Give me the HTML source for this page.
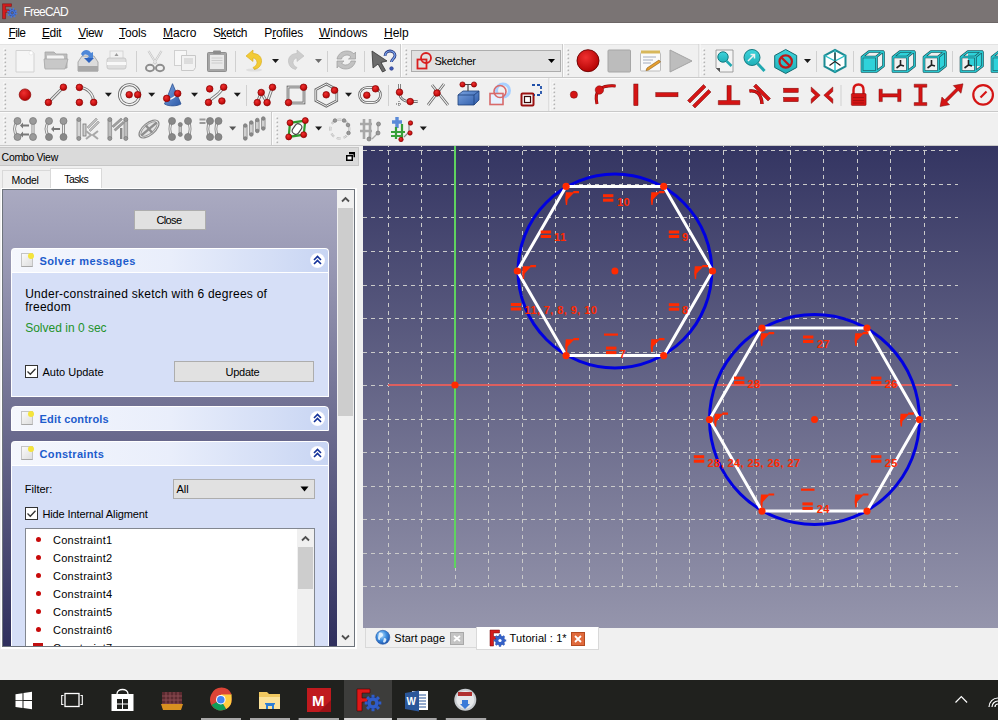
<!DOCTYPE html>
<html><head><meta charset="utf-8">
<style>
*{margin:0;padding:0;box-sizing:border-box}
html,body{width:998px;height:720px;overflow:hidden;background:#f0f0f0;font-family:"Liberation Sans",sans-serif;font-size:11px;color:#000}
.a{position:absolute}
.t{position:absolute;line-height:1;white-space:nowrap}
u{text-decoration:underline;text-underline-offset:1px}
.gripv{position:absolute;width:3px;background:repeating-linear-gradient(#a0a0a0 0 2px,transparent 2px 4px)}
.sepv{position:absolute;width:1px;background:#d2d2d2}
.btn{position:absolute;background:#e1e1e1;border:1px solid #adadad}
.cb{position:absolute;width:13px;height:13px;border:1px solid #333;background:#fff}
.hdrb{position:absolute;left:11px;width:318px;border:1px solid #fff;border-bottom:none;border-radius:4px 4px 0 0;background:linear-gradient(90deg,#f5f7fd 0%,#e9eefb 50%,#c8d5f3 100%)}
.body{position:absolute;left:11px;width:318px;background:#d6dff7;border-left:1px solid #fff;border-right:1px solid #fff}
.doc{position:absolute;width:12px;height:14px;background:linear-gradient(135deg,#fafafa,#dedede);border:1px solid #c4c4c4;border-bottom-color:#a8a8a8}
.dot{position:absolute;width:6px;height:6px;border-radius:50%;background:#f4e43c}
.colb{position:absolute;width:15px;height:15px;border-radius:50%;background:radial-gradient(#fff 60%,#eef 80%,#c9cfdc 100%)}
.hdrt{position:absolute;line-height:1;font-weight:bold;color:#1d5ccc;font-size:11px;white-space:nowrap}
</style></head><body>

<!-- title bar -->
<div class="a" style="left:0;top:0;width:998px;height:23px;background:#7a7474;border-bottom:1px solid #6c6666"></div>
<svg class="a" style="left:2px;top:3px" width="17" height="17" viewBox="0 0 17 17"><path d="M0.5 0.8h9v2.6H3.6v3.4h4.6v2.6H3.6v6.4H0.5z" fill="#d41c1c" stroke="#5a0a0a" stroke-width="0.4"/><circle cx="10.2" cy="9.8" r="3.4" fill="#4a78d8" stroke="#223a90" stroke-width="0.6"/><circle cx="10.2" cy="9.8" r="4.1" fill="none" stroke="#4a78d8" stroke-width="2" stroke-dasharray="1.6 1.6"/><circle cx="10.2" cy="9.8" r="1.3" fill="#7a7474" stroke="#223a90" stroke-width="0.6"/></svg>
<div class="t" style="left:23.5px;top:6px;font-size:12px;color:#fff;letter-spacing:-0.8px">FreeCAD</div>

<!-- menu bar -->
<div class="a" style="left:0;top:23px;width:998px;height:21px;background:#fff"></div>
<div class="t" style="left:8.4px;top:26.6px;font-size:12px;letter-spacing:-0.58px"><u>F</u>ile</div>
<div class="t" style="left:41.9px;top:26.6px;font-size:12px;letter-spacing:-0.29px"><u>E</u>dit</div>
<div class="t" style="left:78.3px;top:26.6px;font-size:12px;letter-spacing:-0.36px"><u>V</u>iew</div>
<div class="t" style="left:119px;top:26.6px;font-size:12px;letter-spacing:-0.1px"><u>T</u>ools</div>
<div class="t" style="left:163px;top:26.6px;font-size:12px;letter-spacing:0px"><u>M</u>acro</div>
<div class="t" style="left:212.9px;top:26.6px;font-size:12px;letter-spacing:-0.42px">S<u>k</u>etch</div>
<div class="t" style="left:264.3px;top:26.6px;font-size:12px;letter-spacing:-0.17px">P<u>r</u>ofiles</div>
<div class="t" style="left:318.9px;top:26.6px;font-size:12px;letter-spacing:0px"><u>W</u>indows</div>
<div class="t" style="left:384px;top:26.6px;font-size:12px;letter-spacing:0px"><u>H</u>elp</div>

<!-- toolbars -->
<div class="a" style="left:0;top:44px;width:998px;height:1px;background:#e3e3e3"></div>
<div class="a" style="left:0;top:77px;width:998px;height:1px;background:#c9c9c9"></div>
<div class="a" style="left:0;top:78px;width:998px;height:1px;background:#fbfbfb"></div>
<div class="a" style="left:0;top:111px;width:998px;height:1px;background:#c9c9c9"></div>
<div class="a" style="left:0;top:112px;width:998px;height:1px;background:#fbfbfb"></div>
<div class="a" style="left:0;top:145px;width:998px;height:1px;background:#c9c9c9"></div>
<svg class="a" style="left:0;top:0" width="998" height="146" viewBox="0 0 998 146">
<defs><radialGradient id="rd" cx="0.4" cy="0.35" r="0.7"><stop offset="0" stop-color="#f03030"/><stop offset="1" stop-color="#b00000"/></radialGradient><linearGradient id="gr" x1="0" y1="0" x2="0" y2="1"><stop offset="0" stop-color="#e2e2e2"/><stop offset="1" stop-color="#a8a8a8"/></linearGradient><linearGradient id="cy" x1="0" y1="0" x2="0" y2="1"><stop offset="0" stop-color="#3fd4dc"/><stop offset="1" stop-color="#1fb0b8"/></linearGradient><linearGradient id="bl" x1="0" y1="0" x2="1" y2="1"><stop offset="0" stop-color="#7aa3e0"/><stop offset="1" stop-color="#2d5aa8"/></linearGradient></defs>
<rect x="3.5" y="48.5" width="2" height="2" fill="#ffffff"/><rect x="4.5" y="49.5" width="1.6" height="1.6" fill="#b4b4b4"/>
<rect x="3.5" y="52.5" width="2" height="2" fill="#ffffff"/><rect x="4.5" y="53.5" width="1.6" height="1.6" fill="#b4b4b4"/>
<rect x="3.5" y="56.5" width="2" height="2" fill="#ffffff"/><rect x="4.5" y="57.5" width="1.6" height="1.6" fill="#b4b4b4"/>
<rect x="3.5" y="60.5" width="2" height="2" fill="#ffffff"/><rect x="4.5" y="61.5" width="1.6" height="1.6" fill="#b4b4b4"/>
<rect x="3.5" y="64.5" width="2" height="2" fill="#ffffff"/><rect x="4.5" y="65.5" width="1.6" height="1.6" fill="#b4b4b4"/>
<rect x="3.5" y="68.5" width="2" height="2" fill="#ffffff"/><rect x="4.5" y="69.5" width="1.6" height="1.6" fill="#b4b4b4"/>
<rect x="3.5" y="72.5" width="2" height="2" fill="#ffffff"/><rect x="4.5" y="73.5" width="1.6" height="1.6" fill="#b4b4b4"/>
<path d="M16 50.5h15l3 3v18.5h-18z" fill="#f6f6f6" stroke="#d2d2d2"/><circle cx="31" cy="53" r="2" fill="#fff" stroke="#ddd" stroke-width="0.5"/>
<path d="M45 52h9l2 2h11v14h-22z" fill="#bdbdbd" stroke="#a5a5a5" stroke-width="0.8"/><path d="M47 55.5h16l1 1v5h-17z" fill="#f4f4f4"/><path d="M44 59h24l-3 10h-20z" fill="#c8c8c8" stroke="#a8a8a8" stroke-width="0.8"/>
<path d="M78 62l4-6h12l4 6v9h-20z" fill="#dcdcdc" stroke="#9b9b9b" stroke-width="0.8"/><rect x="78" y="66" width="20" height="5.5" fill="#a8a8a8"/><path d="M81 54c2-5 8-5 10-1l2-1v6h-6l2-1.5c-1-2-5-3-6 0z" fill="#4f88d8"/><path d="M84 58h10l-5 5z" fill="#2e64c0"/>
<rect x="110" y="51" width="13" height="8" fill="#f2f2f2" stroke="#cfcfcf" stroke-width="0.8"/><path d="M114.5 56l2-3 2 3z" fill="#9a9a9a"/><rect x="107" y="58" width="19" height="11" rx="2" fill="#dedede" stroke="#c2c2c2" stroke-width="0.8"/><rect x="107" y="62" width="19" height="3" fill="#f8f8f8"/>
<rect x="136" y="51" width="1" height="21" fill="#d0d0d0"/>
<path d="M148.5 51l8 13M161.5 51l-8 13" stroke="#c4c4c4" stroke-width="2.2"/><path d="M148.5 51l8 13M161.5 51l-8 13" stroke="#f4f4f4" stroke-width="0.8"/><ellipse cx="150" cy="68" rx="4" ry="3.2" fill="none" stroke="#8e8e8e" stroke-width="2"/><ellipse cx="160" cy="68" rx="4" ry="3.2" fill="none" stroke="#8e8e8e" stroke-width="2"/>
<rect x="174.5" y="50.5" width="12" height="15" fill="#f7f7f7" stroke="#d0d0d0"/><path d="M181.5 55.5h14v12l-2 3h-12z" fill="#f2f2f2" stroke="#c8c8c8"/><path d="M184 59h9M184 61h9M184 63h9" stroke="#bdbdbd" stroke-width="0.8"/>
<rect x="207.5" y="52.5" width="19" height="19" rx="1" fill="#a6a6a6" stroke="#8f8f8f"/><rect x="210" y="55" width="14" height="14" fill="#e9e9e9"/><rect x="213" y="50.5" width="8" height="3.5" rx="1" fill="#8c8c8c"/><path d="M211.5 58h11M211.5 60.5h11M211.5 63h11" stroke="#c4c4c4" stroke-width="0.8"/>
<rect x="235" y="51" width="1" height="21" fill="#d0d0d0"/>
<path d="M246 56l7-6v3.5c6 0 9 4 8.5 8.5-.5 4-3 6.5-7 7.5l-1.5-2c2.5-1 4-3 4-5 0-2.5-2-4.5-4-4.5v3.5z" fill="#f2cb36" stroke="#d9a91a" stroke-width="0.6"/><ellipse cx="254" cy="70" rx="8" ry="1.6" fill="#000" opacity="0.07"/>
<path d="M272.0 59 h7 l-3.5 4z" fill="#1a1a1a"/>
<path d="M304 56l-7-6v3.5c-6 0-9 4-8.5 8.5.5 4 3 6.5 7 7.5l1.5-2c-2.5-1-4-3-4-5 0-2.5 2-4.5 4-4.5v3.5z" fill="#cdcdcd" stroke="#bcbcbc" stroke-width="0.6"/>
<path d="M315.0 59 h7 l-3.5 4z" fill="#6e6e6e"/>
<rect x="327" y="51" width="1" height="21" fill="#d0d0d0"/>
<path d="M337 59c1-5 5-8 10-8 3 0 5.5 1.2 7 3l1.5-2v7h-7l2.5-2c-1-1.3-2.5-2-4-2-3 0-5 2-5.5 4z" fill="#c2c2c2" stroke="#9c9c9c" stroke-width="0.7"/><path d="M355.5 61c-1 5-5 8-10 8-3 0-5.5-1.2-7-3l-1.5 2v-7h7l-2.5 2c1 1.3 2.5 2 4 2 3 0 5-2 5.5-4z" fill="#c2c2c2" stroke="#9c9c9c" stroke-width="0.7"/>
<rect x="364" y="51" width="1" height="21" fill="#d0d0d0"/>
<path d="M372 51l15 10-6 1.5 4.5 8-3 1.5-4.5-8-5 4z" fill="#6c6c6c" stroke="#333" stroke-width="0.8"/><path d="M385 56c0-3 2.5-5 5-5s5 2 5 4.5c0 3-3.5 3.5-3.5 6.5" fill="none" stroke="#28337a" stroke-width="2.8"/><path d="M385 56c0-3 2.5-5 5-5s5 2 5 4.5c0 3-3.5 3.5-3.5 6.5" fill="none" stroke="#7aa8f0" stroke-width="1.2"/><circle cx="391.5" cy="68.5" r="1.8" fill="#3a5ab8" stroke="#28337a" stroke-width="0.6"/>
<rect x="400" y="44" width="1" height="33" fill="#cbcbcb"/><rect x="401" y="44" width="1" height="33" fill="#fcfcfc"/>
<rect x="404.5" y="48.5" width="2" height="2" fill="#ffffff"/><rect x="405.5" y="49.5" width="1.6" height="1.6" fill="#b4b4b4"/>
<rect x="404.5" y="52.5" width="2" height="2" fill="#ffffff"/><rect x="405.5" y="53.5" width="1.6" height="1.6" fill="#b4b4b4"/>
<rect x="404.5" y="56.5" width="2" height="2" fill="#ffffff"/><rect x="405.5" y="57.5" width="1.6" height="1.6" fill="#b4b4b4"/>
<rect x="404.5" y="60.5" width="2" height="2" fill="#ffffff"/><rect x="405.5" y="61.5" width="1.6" height="1.6" fill="#b4b4b4"/>
<rect x="404.5" y="64.5" width="2" height="2" fill="#ffffff"/><rect x="405.5" y="65.5" width="1.6" height="1.6" fill="#b4b4b4"/>
<rect x="404.5" y="68.5" width="2" height="2" fill="#ffffff"/><rect x="405.5" y="69.5" width="1.6" height="1.6" fill="#b4b4b4"/>
<rect x="404.5" y="72.5" width="2" height="2" fill="#ffffff"/><rect x="405.5" y="73.5" width="1.6" height="1.6" fill="#b4b4b4"/>
<rect x="411.5" y="50.5" width="149" height="21" fill="#e1e1e1" stroke="#adadad"/>
<rect x="417.5" y="59.5" width="9" height="9" fill="none" stroke="#d91e1e" stroke-width="1.8"/><circle cx="426" cy="58" r="5" fill="none" stroke="#d91e1e" stroke-width="1.8"/>
<text x="434.5" y="64.8" font-family="Liberation Sans" font-size="11" letter-spacing="-0.27">Sketcher</text>
<path d="M548.0 59 h7 l-3.5 4z" fill="#000"/>
<rect x="562" y="44" width="1" height="33" fill="#cbcbcb"/><rect x="563" y="44" width="1" height="33" fill="#fcfcfc"/>
<rect x="566.5" y="48.5" width="2" height="2" fill="#ffffff"/><rect x="567.5" y="49.5" width="1.6" height="1.6" fill="#b4b4b4"/>
<rect x="566.5" y="52.5" width="2" height="2" fill="#ffffff"/><rect x="567.5" y="53.5" width="1.6" height="1.6" fill="#b4b4b4"/>
<rect x="566.5" y="56.5" width="2" height="2" fill="#ffffff"/><rect x="567.5" y="57.5" width="1.6" height="1.6" fill="#b4b4b4"/>
<rect x="566.5" y="60.5" width="2" height="2" fill="#ffffff"/><rect x="567.5" y="61.5" width="1.6" height="1.6" fill="#b4b4b4"/>
<rect x="566.5" y="64.5" width="2" height="2" fill="#ffffff"/><rect x="567.5" y="65.5" width="1.6" height="1.6" fill="#b4b4b4"/>
<rect x="566.5" y="68.5" width="2" height="2" fill="#ffffff"/><rect x="567.5" y="69.5" width="1.6" height="1.6" fill="#b4b4b4"/>
<rect x="566.5" y="72.5" width="2" height="2" fill="#ffffff"/><rect x="567.5" y="73.5" width="1.6" height="1.6" fill="#b4b4b4"/>
<circle cx="588" cy="60.7" r="11" fill="url(#rd)" stroke="#6a0000" stroke-width="0.9"/>
<rect x="608" y="50" width="22.5" height="22" rx="1" fill="#bcbcbc" stroke="#a6a6a6"/>
<rect x="640.5" y="52.5" width="20" height="18.5" rx="1" fill="#fafafa" stroke="#bcbcbc"/><rect x="641" y="50.5" width="19" height="3" fill="#d7b75c"/><path d="M643 57h13M643 60h10M643 63h8" stroke="#9aa4b8" stroke-width="0.9"/><path d="M647 68l12-8 1.5 2-12 8-2.5 .5z" fill="#e8a030" stroke="#8a5a10" stroke-width="0.6"/>
<path d="M670 50v22l22-11z" fill="#bdbdbd" stroke="#a4a4a4"/>
<rect x="698.5" y="44" width="1" height="33" fill="#cbcbcb"/><rect x="699.5" y="44" width="1" height="33" fill="#fcfcfc"/>
<rect x="702.5" y="48.5" width="2" height="2" fill="#ffffff"/><rect x="703.5" y="49.5" width="1.6" height="1.6" fill="#b4b4b4"/>
<rect x="702.5" y="52.5" width="2" height="2" fill="#ffffff"/><rect x="703.5" y="53.5" width="1.6" height="1.6" fill="#b4b4b4"/>
<rect x="702.5" y="56.5" width="2" height="2" fill="#ffffff"/><rect x="703.5" y="57.5" width="1.6" height="1.6" fill="#b4b4b4"/>
<rect x="702.5" y="60.5" width="2" height="2" fill="#ffffff"/><rect x="703.5" y="61.5" width="1.6" height="1.6" fill="#b4b4b4"/>
<rect x="702.5" y="64.5" width="2" height="2" fill="#ffffff"/><rect x="703.5" y="65.5" width="1.6" height="1.6" fill="#b4b4b4"/>
<rect x="702.5" y="68.5" width="2" height="2" fill="#ffffff"/><rect x="703.5" y="69.5" width="1.6" height="1.6" fill="#b4b4b4"/>
<rect x="702.5" y="72.5" width="2" height="2" fill="#ffffff"/><rect x="703.5" y="73.5" width="1.6" height="1.6" fill="#b4b4b4"/>
<path d="M716 50h17v22h-13l-4-4z" fill="#f4f4f4" stroke="#8c8c8c" stroke-width="0.8"/><path d="M716 68h4v4z" fill="#555"/><circle cx="723" cy="57" r="5.2" fill="url(#cy)" stroke="#157a80" stroke-width="1"/><path d="M726.5 61l5 5" stroke="#1fa8b0" stroke-width="2.5"/>
<circle cx="752" cy="57.5" r="8" fill="url(#cy)" stroke="#157a80" stroke-width="1"/><path d="M757.5 63.5l7 7.5" stroke="#1fa8b0" stroke-width="3"/><path d="M748 61l6-6M750.5 54.5h4v4" fill="none" stroke="#f0f0f0" stroke-width="1.5"/>
<path d="M785.7 49.5l11 6v12l-11 6-11-6v-12z" fill="url(#cy)" stroke="#156a70" stroke-width="1"/><circle cx="785.7" cy="61.5" r="6.2" fill="none" stroke="#c01818" stroke-width="2.2"/><path d="M781.5 57.5l8.5 8.5" stroke="#c01818" stroke-width="2.2"/>
<path d="M804.0 59 h7 l-3.5 4z" fill="#1a1a1a"/>
<rect x="816" y="51" width="1" height="21" fill="#d0d0d0"/>
<g transform="translate(823.5 49.5)"><path d="M11.5 0.5l10.5 5.5v11l-10.5 5.5-10.5-5.5v-11z" fill="#ffffff" stroke="#1d8c94" stroke-width="2"/><path d="M11.5 0.5v22M1 6l10.5 5.5 10.5-5.5" fill="none" stroke="#26c0c8" stroke-width="1.4"/><path d="M11.5 3v8M6 16l5.5-4 5.5 4" stroke="#222" stroke-width="1.2" fill="none"/></g>
<rect x="853" y="51" width="1" height="21" fill="#d0d0d0"/>
<g transform="translate(860.5 49.5)"><path d="M1.5 7.5h14.5v14.5h-14.5z" fill="#2fd2da"/><path d="M1.5 7.5l7-5.5h14l-7 5.5z" fill="none"/><path d="M16 7.5l7-5.5v14.5l-7 5.5z" fill="none"/><path d="M1.5 7.5h14.5v14.5h-14.5zM1.5 7.5l7-5.5h14l-7 5.5M16 22l7-5.5v-14.5" fill="none" stroke="#1a4a50" stroke-width="2.6" stroke-linejoin="round"/><path d="M1.5 7.5h14.5v14.5h-14.5zM1.5 7.5l7-5.5h14l-7 5.5M16 22l7-5.5v-14.5" fill="none" stroke="#27c4cc" stroke-width="1.5" stroke-linejoin="round"/></g>
<g transform="translate(891.5 49.5)"><path d="M1.5 7.5h14.5v14.5h-14.5z" fill="none"/><path d="M1.5 7.5l7-5.5h14l-7 5.5z" fill="#2fd2da"/><path d="M16 7.5l7-5.5v14.5l-7 5.5z" fill="none"/><path d="M1.5 7.5h14.5v14.5h-14.5zM1.5 7.5l7-5.5h14l-7 5.5M16 22l7-5.5v-14.5" fill="none" stroke="#1a4a50" stroke-width="2.6" stroke-linejoin="round"/><path d="M1.5 7.5h14.5v14.5h-14.5zM1.5 7.5l7-5.5h14l-7 5.5M16 22l7-5.5v-14.5" fill="none" stroke="#27c4cc" stroke-width="1.5" stroke-linejoin="round"/><path d="M9 10.5v5M9 15.5l-4 3M9 15.5l3.5 1" stroke="#222" stroke-width="1.6"/></g>
<g transform="translate(922.5 49.5)"><path d="M1.5 7.5h14.5v14.5h-14.5z" fill="none"/><path d="M1.5 7.5l7-5.5h14l-7 5.5z" fill="none"/><path d="M16 7.5l7-5.5v14.5l-7 5.5z" fill="#2fd2da"/><path d="M1.5 7.5h14.5v14.5h-14.5zM1.5 7.5l7-5.5h14l-7 5.5M16 22l7-5.5v-14.5" fill="none" stroke="#1a4a50" stroke-width="2.6" stroke-linejoin="round"/><path d="M1.5 7.5h14.5v14.5h-14.5zM1.5 7.5l7-5.5h14l-7 5.5M16 22l7-5.5v-14.5" fill="none" stroke="#27c4cc" stroke-width="1.5" stroke-linejoin="round"/><path d="M9 10.5v5M9 15.5l-4 3M9 15.5l3.5 1" stroke="#222" stroke-width="1.6"/></g>
<rect x="952" y="51" width="1" height="21" fill="#d0d0d0"/>
<g transform="translate(959.5 49.5)"><path d="M8.5 2h14v14.5h-14z" fill="#2fd2da"/><path d="M1.5 7.5h14.5v14.5h-14.5z" fill="none"/><path d="M1.5 7.5l7-5.5h14l-7 5.5z" fill="none"/><path d="M16 7.5l7-5.5v14.5l-7 5.5z" fill="none"/><path d="M1.5 7.5h14.5v14.5h-14.5zM1.5 7.5l7-5.5h14l-7 5.5M16 22l7-5.5v-14.5" fill="none" stroke="#1a4a50" stroke-width="2.6" stroke-linejoin="round"/><path d="M1.5 7.5h14.5v14.5h-14.5zM1.5 7.5l7-5.5h14l-7 5.5M16 22l7-5.5v-14.5" fill="none" stroke="#27c4cc" stroke-width="1.5" stroke-linejoin="round"/><path d="M9 10.5v5M9 15.5l-4 3M9 15.5l3.5 1" stroke="#222" stroke-width="1.6"/></g>
<g transform="translate(990.5 49.5)"><path d="M1.5 7.5h14.5v14.5h-14.5z" fill="#2fd2da"/><path d="M1.5 7.5l7-5.5h14l-7 5.5z" fill="none"/><path d="M16 7.5l7-5.5v14.5l-7 5.5z" fill="none"/><path d="M1.5 7.5h14.5v14.5h-14.5zM1.5 7.5l7-5.5h14l-7 5.5M16 22l7-5.5v-14.5" fill="none" stroke="#1a4a50" stroke-width="2.6" stroke-linejoin="round"/><path d="M1.5 7.5h14.5v14.5h-14.5zM1.5 7.5l7-5.5h14l-7 5.5M16 22l7-5.5v-14.5" fill="none" stroke="#27c4cc" stroke-width="1.5" stroke-linejoin="round"/></g>
<rect x="3.5" y="82.5" width="2" height="2" fill="#ffffff"/><rect x="4.5" y="83.5" width="1.6" height="1.6" fill="#b4b4b4"/>
<rect x="3.5" y="86.5" width="2" height="2" fill="#ffffff"/><rect x="4.5" y="87.5" width="1.6" height="1.6" fill="#b4b4b4"/>
<rect x="3.5" y="90.5" width="2" height="2" fill="#ffffff"/><rect x="4.5" y="91.5" width="1.6" height="1.6" fill="#b4b4b4"/>
<rect x="3.5" y="94.5" width="2" height="2" fill="#ffffff"/><rect x="4.5" y="95.5" width="1.6" height="1.6" fill="#b4b4b4"/>
<rect x="3.5" y="98.5" width="2" height="2" fill="#ffffff"/><rect x="4.5" y="99.5" width="1.6" height="1.6" fill="#b4b4b4"/>
<rect x="3.5" y="102.5" width="2" height="2" fill="#ffffff"/><rect x="4.5" y="103.5" width="1.6" height="1.6" fill="#b4b4b4"/>
<rect x="3.5" y="106.5" width="2" height="2" fill="#ffffff"/><rect x="4.5" y="107.5" width="1.6" height="1.6" fill="#b4b4b4"/>
<circle cx="25" cy="94.7" r="5.8" fill="url(#rd)" stroke="#8a0000" stroke-width="0.7"/>
<path d="M48.4 102.4L63.4 87.2" stroke="#777" stroke-width="3"/><path d="M48.4 102.4L63.4 87.2" stroke="#f4f4f4" stroke-width="1.2"/>
<circle cx="48.4" cy="102.4" r="3.3" fill="url(#rd)" stroke="#8a0000" stroke-width="0.7"/>
<circle cx="63.4" cy="87.2" r="3.3" fill="url(#rd)" stroke="#8a0000" stroke-width="0.7"/>
<path d="M79.4 87.4C87 87.4 93.7 94 93.7 102.4" fill="none" stroke="#777" stroke-width="3"/><path d="M79.4 87.4C87 87.4 93.7 94 93.7 102.4" fill="none" stroke="#f4f4f4" stroke-width="1.2"/>
<circle cx="79.4" cy="87.4" r="3.3" fill="url(#rd)" stroke="#8a0000" stroke-width="0.7"/>
<circle cx="79.4" cy="102.4" r="3.3" fill="url(#rd)" stroke="#8a0000" stroke-width="0.7"/>
<circle cx="93.7" cy="102.4" r="3.3" fill="url(#rd)" stroke="#8a0000" stroke-width="0.7"/>
<path d="M104.9 92.7 h7 l-3.5 4z" fill="#1a1a1a"/>
<circle cx="129.5" cy="94.7" r="10" fill="none" stroke="#666" stroke-width="3"/><circle cx="129.5" cy="94.7" r="10" fill="none" stroke="#f4f4f4" stroke-width="1.3"/>
<circle cx="129.2" cy="94.7" r="3.3" fill="url(#rd)" stroke="#8a0000" stroke-width="0.7"/>
<circle cx="137.7" cy="94.7" r="3.3" fill="url(#rd)" stroke="#8a0000" stroke-width="0.7"/>
<path d="M148.2 92.7 h7 l-3.5 4z" fill="#1a1a1a"/>
<path d="M172.5 83.7L164.5 104c4 2.5 12 2.5 16.5 0z" fill="url(#bl)" stroke="#2a4f90" stroke-width="0.8"/><path d="M166.7 98.4c3 1.5 7 0 11-4.9" fill="none" stroke="#f4f4f4" stroke-width="1.4"/>
<circle cx="166.7" cy="98.4" r="3.3" fill="url(#rd)" stroke="#8a0000" stroke-width="0.7"/>
<circle cx="177.7" cy="93.5" r="3.3" fill="url(#rd)" stroke="#8a0000" stroke-width="0.7"/>
<path d="M191.0 92.7 h7 l-3.5 4z" fill="#1a1a1a"/>
<path d="M208.5 102.4C212 96 216 99 223.7 87.2" fill="none" stroke="#777" stroke-width="3"/><path d="M208.5 102.4C212 96 216 99 223.7 87.2" fill="none" stroke="#f4f4f4" stroke-width="1.2"/>
<circle cx="209.7" cy="88.9" r="3.3" fill="url(#rd)" stroke="#8a0000" stroke-width="0.7"/>
<circle cx="223.7" cy="87.2" r="3.3" fill="url(#rd)" stroke="#8a0000" stroke-width="0.7"/>
<circle cx="208.5" cy="102.4" r="3.3" fill="url(#rd)" stroke="#8a0000" stroke-width="0.7"/>
<circle cx="221.9" cy="101" r="3.3" fill="url(#rd)" stroke="#8a0000" stroke-width="0.7"/>
<path d="M233.8 92.7 h7 l-3.5 4z" fill="#1a1a1a"/>
<rect x="246" y="85" width="1" height="21" fill="#d0d0d0"/>
<path d="M257.3 102.6L261.2 92.5L267.1 102.6L272.5 87.3" fill="none" stroke="#777" stroke-width="3"/><path d="M257.3 102.6L261.2 92.5L267.1 102.6L272.5 87.3" fill="none" stroke="#f4f4f4" stroke-width="1.2"/>
<circle cx="257.3" cy="102.6" r="3.3" fill="url(#rd)" stroke="#8a0000" stroke-width="0.7"/>
<circle cx="261.2" cy="92.5" r="3.3" fill="url(#rd)" stroke="#8a0000" stroke-width="0.7"/>
<circle cx="267.1" cy="102.6" r="3.3" fill="url(#rd)" stroke="#8a0000" stroke-width="0.7"/>
<circle cx="272.5" cy="87.3" r="3.3" fill="url(#rd)" stroke="#8a0000" stroke-width="0.7"/>
<rect x="288" y="87" width="16" height="16" fill="none" stroke="#555" stroke-width="2.6"/><rect x="288" y="87" width="16" height="16" fill="none" stroke="#f4f4f4" stroke-width="1"/>
<circle cx="288.5" cy="102.6" r="3.3" fill="url(#rd)" stroke="#8a0000" stroke-width="0.7"/>
<circle cx="303.6" cy="87.3" r="3.3" fill="url(#rd)" stroke="#8a0000" stroke-width="0.7"/>
<path d="M326.3 84l10.5 5.6v11l-10.5 5.6-10.5-5.6v-11z" fill="none" stroke="#666" stroke-width="2.6"/><path d="M326.3 84l10.5 5.6v11l-10.5 5.6-10.5-5.6v-11z" fill="none" stroke="#f4f4f4" stroke-width="1"/>
<circle cx="326.2" cy="94.8" r="3.3" fill="url(#rd)" stroke="#8a0000" stroke-width="0.7"/>
<circle cx="334.5" cy="90.3" r="3.3" fill="url(#rd)" stroke="#8a0000" stroke-width="0.7"/>
<path d="M345.0 92.7 h7 l-3.5 4z" fill="#1a1a1a"/>
<rect x="359.5" y="87.5" width="21" height="15" rx="7.5" fill="none" stroke="#666" stroke-width="2.6"/><rect x="359.5" y="87.5" width="21" height="15" rx="7.5" fill="none" stroke="#f4f4f4" stroke-width="1"/>
<circle cx="366.8" cy="95.2" r="3.3" fill="url(#rd)" stroke="#8a0000" stroke-width="0.7"/>
<circle cx="375.5" cy="88.8" r="3.3" fill="url(#rd)" stroke="#8a0000" stroke-width="0.7"/>
<rect x="388" y="85" width="1" height="21" fill="#d0d0d0"/>
<path d="M399.5 84v8c0 6 4 9.6 10.7 9.6h7.5" fill="none" stroke="#666" stroke-width="2.6"/><path d="M399.5 84v8c0 6 4 9.6 10.7 9.6h7.5" fill="none" stroke="#f4f4f4" stroke-width="1"/><path d="M396 104h6M399 101v5" stroke="#555" stroke-width="1" stroke-dasharray="1 1"/>
<circle cx="399.5" cy="92.2" r="3.3" fill="url(#rd)" stroke="#8a0000" stroke-width="0.7"/>
<circle cx="410.2" cy="101.6" r="3.3" fill="url(#rd)" stroke="#8a0000" stroke-width="0.7"/>
<path d="M432 85l16 20M444 84l-16 21" stroke="#666" stroke-width="2.8"/><path d="M432 85l16 20M444 84l-16 21" stroke="#f4f4f4" stroke-width="1.2"/>
<circle cx="437" cy="93" r="3.3" fill="url(#rd)" stroke="#8a0000" stroke-width="0.7"/>
<path d="M458 95l5-4h16v9l-5 5h-16z" fill="url(#bl)" stroke="#1d3f7a" stroke-width="0.8"/><path d="M458 95h16v10M474 95l5-4" fill="none" stroke="#1d3f7a" stroke-width="0.8"/><path d="M463 84.5h10M468 85v6" stroke="#444" stroke-width="1.2"/>
<circle cx="462.5" cy="84.5" r="2.6" fill="url(#rd)" stroke="#8a0000" stroke-width="0.7"/>
<circle cx="474" cy="84.5" r="2.6" fill="url(#rd)" stroke="#8a0000" stroke-width="0.7"/>
<circle cx="503" cy="90.5" r="6.5" fill="none" stroke="#a8d0ff" stroke-width="3"/><rect x="490" y="93.5" width="13" height="11" fill="#e6f1ff" stroke="#d86a6a" stroke-width="1.6"/><circle cx="500" cy="91.5" r="6" fill="none" stroke="#d86a6a" stroke-width="1.6"/>
<rect x="521.5" y="93.5" width="12" height="12" rx="1" fill="#f6f6f6" stroke="#9a1010" stroke-width="2"/><rect x="524.5" y="96.5" width="6" height="6" fill="#fff" stroke="#3a0a0a" stroke-width="1.2"/><path d="M532 85h9v10h-7" fill="none" stroke="#1f4fa8" stroke-width="1.8" stroke-dasharray="3 2"/>
<rect x="548.5" y="78" width="1" height="33" fill="#cbcbcb"/><rect x="549.5" y="78" width="1" height="33" fill="#fcfcfc"/>
<rect x="552.5" y="82.5" width="2" height="2" fill="#ffffff"/><rect x="553.5" y="83.5" width="1.6" height="1.6" fill="#b4b4b4"/>
<rect x="552.5" y="86.5" width="2" height="2" fill="#ffffff"/><rect x="553.5" y="87.5" width="1.6" height="1.6" fill="#b4b4b4"/>
<rect x="552.5" y="90.5" width="2" height="2" fill="#ffffff"/><rect x="553.5" y="91.5" width="1.6" height="1.6" fill="#b4b4b4"/>
<rect x="552.5" y="94.5" width="2" height="2" fill="#ffffff"/><rect x="553.5" y="95.5" width="1.6" height="1.6" fill="#b4b4b4"/>
<rect x="552.5" y="98.5" width="2" height="2" fill="#ffffff"/><rect x="553.5" y="99.5" width="1.6" height="1.6" fill="#b4b4b4"/>
<rect x="552.5" y="102.5" width="2" height="2" fill="#ffffff"/><rect x="553.5" y="103.5" width="1.6" height="1.6" fill="#b4b4b4"/>
<rect x="552.5" y="106.5" width="2" height="2" fill="#ffffff"/><rect x="553.5" y="107.5" width="1.6" height="1.6" fill="#b4b4b4"/>
<circle cx="573.9" cy="94.7" r="3.6" fill="#d41414" stroke="#7a0a0a" stroke-width="0.5"/>
<path d="M597 104c-1.5-6-.5-12 3-15 4-3 9-3.5 15.5-3" fill="none" stroke="#7a0a0a" stroke-width="3"/><path d="M597 104c-1.5-6-.5-12 3-15 4-3 9-3.5 15.5-3" fill="none" stroke="#d41414" stroke-width="2"/><circle cx="599.4" cy="90" r="4.2" fill="#d41414" stroke="#7a0a0a" stroke-width="0.5"/>
<rect x="633.8" y="84" width="4.2" height="21.6" fill="#d41414" stroke="#7a0a0a" stroke-width="0.5"/>
<rect x="655.8" y="92.6" width="22.2" height="4.2" fill="#d41414" stroke="#7a0a0a" stroke-width="0.5"/>
<path d="M687.5 100.5l16-16 2.5 2.5-16 16z M692.5 105.5l16-16 2.5 2.5-16 16z" fill="#d41414" stroke="#7a0a0a" stroke-width="0.5"/>
<path d="M727 85.5h4.2v15h8.7v4.2h-21.6v-4.2h8.7z" fill="#d41414" stroke="#7a0a0a" stroke-width="0.5"/>
<path d="M756 84l14.5 14.5-2.5 2.5-14.5-14.5z" fill="#d41414" stroke="#7a0a0a" stroke-width="0.5"/><path d="M749.5 91c7-1 12 3 12.5 13" fill="none" stroke="#7a0a0a" stroke-width="3.4"/><path d="M749.5 91c7-1 12 3 12.5 13" fill="none" stroke="#d41414" stroke-width="2.4"/>
<rect x="783.6" y="88.2" width="14.6" height="4.3" fill="#d41414" stroke="#7a0a0a" stroke-width="0.5"/><rect x="783.6" y="97.4" width="14.6" height="4.3" fill="#d41414" stroke="#7a0a0a" stroke-width="0.5"/>
<path d="M811.2 87l9 8.2-9 8.2v-4.5l4.2-3.7-4.2-3.7z M832.8 87l-9 8.2 9 8.2v-4.5l-4.2-3.7 4.2-3.7z" fill="#d41414" stroke="#7a0a0a" stroke-width="0.5"/>
<rect x="840.5" y="85" width="1" height="21" fill="#d0d0d0"/>
<path d="M853.5 94v-4c0-3.5 2-5.5 5-5.5s5 2 5 5.5v4" fill="none" stroke="#d41414" stroke-width="2.4"/><rect x="851.3" y="93.5" width="14.8" height="12" rx="1" fill="#d41414" stroke="#7a0a0a" stroke-width="0.5"/><path d="M853 97.5h11M853 100.5h11M853 103h11" stroke="#9a0c0c" stroke-width="0.7"/>
<path d="M879 89.2h3.3v4.6h15.4v-4.6h3.3v12.4h-3.3v-4.6h-15.4v4.6h-3.3z" fill="#d41414" stroke="#7a0a0a" stroke-width="0.5"/>
<path d="M914.2 84.2h12.6v3h-4.6v15.4h4.6v3h-12.6v-3h4.6v-15.4h-4.6z" fill="#d41414" stroke="#7a0a0a" stroke-width="0.5"/>
<path d="M963 83.8l-2 9.5-2.8-2.8-11.4 11.4 2.8 2.8-9.5 1.8 1.8-9.5 2.8 2.8 11.4-11.4-2.8-2.8z" fill="#d41414" stroke="#7a0a0a" stroke-width="0.5"/>
<circle cx="983.1" cy="94.9" r="9.8" fill="none" stroke="#d41414" stroke-width="2.2"/><path d="M980.5 97.5l6-6" stroke="#d41414" stroke-width="2.2"/>
<rect x="3.5" y="116.5" width="2" height="2" fill="#ffffff"/><rect x="4.5" y="117.5" width="1.6" height="1.6" fill="#b4b4b4"/>
<rect x="3.5" y="120.5" width="2" height="2" fill="#ffffff"/><rect x="4.5" y="121.5" width="1.6" height="1.6" fill="#b4b4b4"/>
<rect x="3.5" y="124.5" width="2" height="2" fill="#ffffff"/><rect x="4.5" y="125.5" width="1.6" height="1.6" fill="#b4b4b4"/>
<rect x="3.5" y="128.5" width="2" height="2" fill="#ffffff"/><rect x="4.5" y="129.5" width="1.6" height="1.6" fill="#b4b4b4"/>
<rect x="3.5" y="132.5" width="2" height="2" fill="#ffffff"/><rect x="4.5" y="133.5" width="1.6" height="1.6" fill="#b4b4b4"/>
<rect x="3.5" y="136.5" width="2" height="2" fill="#ffffff"/><rect x="4.5" y="137.5" width="1.6" height="1.6" fill="#b4b4b4"/>
<rect x="3.5" y="140.5" width="2" height="2" fill="#ffffff"/><rect x="4.5" y="141.5" width="1.6" height="1.6" fill="#b4b4b4"/>
<path d="M17.5 121c-4 6-4 10 0 16" fill="none" stroke="#8a8a8a" stroke-width="3"/><path d="M17.5 121c-4 6-4 10 0 16" fill="none" stroke="#efefef" stroke-width="1.2"/>
<path d="M33 121v16" fill="none" stroke="#8a8a8a" stroke-width="3"/><path d="M33 121v16" fill="none" stroke="#efefef" stroke-width="1.2"/>
<circle cx="17.5" cy="121" r="3.5" fill="#9a9a9a" stroke="#777" stroke-width="0.7"/>
<circle cx="33" cy="121" r="3.5" fill="#9a9a9a" stroke="#777" stroke-width="0.7"/>
<circle cx="17.5" cy="137" r="3.5" fill="#9a9a9a" stroke="#777" stroke-width="0.7"/>
<circle cx="33" cy="137" r="3.5" fill="#9a9a9a" stroke="#777" stroke-width="0.7"/>
<path d="M29 124.5h-6v-2l-3 3 3 3v-2h6zM29 133.5h-6v-2l-3 3 3 3v-2h6z" fill="#777"/>
<path d="M49 121c-4 6-4 10 0 16" fill="none" stroke="#8a8a8a" stroke-width="3"/><path d="M49 121c-4 6-4 10 0 16" fill="none" stroke="#efefef" stroke-width="1.2"/>
<path d="M63.5 121v16" fill="none" stroke="#8a8a8a" stroke-width="3"/><path d="M63.5 121v16" fill="none" stroke="#efefef" stroke-width="1.2"/>
<circle cx="49" cy="121" r="3.5" fill="#9a9a9a" stroke="#777" stroke-width="0.7"/>
<circle cx="63.5" cy="121" r="3.5" fill="#9a9a9a" stroke="#777" stroke-width="0.7"/>
<circle cx="49" cy="137" r="3.5" fill="#888" stroke="#777" stroke-width="0.7"/>
<circle cx="63.5" cy="137" r="3.5" fill="#888" stroke="#777" stroke-width="0.7"/>
<path d="M60 128h-6v-2l-3 3 3 3v-2h6z" fill="#777"/>
<rect x="77" y="119" width="3.6" height="20" rx="1.5" fill="#d4d4d4" stroke="#8a8a8a" stroke-width="0.8"/><rect x="83" y="124" width="3" height="12" fill="#cfcfcf" stroke="#777" stroke-width="0.8"/><path d="M87 127l9-9 1.5 1.5-9 9zM89 130l9-9 1.5 1.5-9 9z" fill="#bdbdbd" stroke="#8a8a8a" stroke-width="0.5"/><path d="M86 131l5 4-5 4M98 131l-5 4 5 4" fill="none" stroke="#a8a8a8" stroke-width="2"/>
<circle cx="78.8" cy="119.5" r="2" fill="#9a9a9a" stroke="#777" stroke-width="0.7"/>
<circle cx="78.8" cy="138.5" r="2" fill="#9a9a9a" stroke="#777" stroke-width="0.7"/>
<rect x="108" y="119" width="3.6" height="20" rx="1.5" fill="#bdbdbd" stroke="#8a8a8a" stroke-width="0.8"/><rect x="124" y="119" width="3.6" height="20" rx="1.5" fill="#bdbdbd" stroke="#8a8a8a" stroke-width="0.8"/><path d="M112 126l9-8 1.5 1.5-9 8zM114 129.5l9-8 1.5 1.5-9 8z" fill="#a0a0a0" stroke="#777" stroke-width="0.5"/><rect x="120" y="128" width="2.4" height="11" fill="#888"/>
<circle cx="109.8" cy="119.5" r="2" fill="#9a9a9a" stroke="#777" stroke-width="0.7"/>
<circle cx="109.8" cy="138.5" r="2" fill="#9a9a9a" stroke="#777" stroke-width="0.7"/>
<circle cx="125.8" cy="119.5" r="2" fill="#9a9a9a" stroke="#777" stroke-width="0.7"/>
<circle cx="125.8" cy="138.5" r="2" fill="#9a9a9a" stroke="#777" stroke-width="0.7"/>
<g transform="rotate(-40 149 129)"><ellipse cx="149" cy="129" rx="12" ry="6" fill="none" stroke="#8a8a8a" stroke-width="1.2"/><ellipse cx="149" cy="129" rx="10" ry="4.4" fill="#e4e4e4" stroke="#9a9a9a" stroke-width="1"/><path d="M139 129h20M149 124v10" stroke="#8e8e8e" stroke-width="2.4"/></g>
<path d="M172 121c-3 6-3 10 0 16" fill="none" stroke="#8a8a8a" stroke-width="3"/><path d="M172 121c-3 6-3 10 0 16" fill="none" stroke="#efefef" stroke-width="1.2"/>
<path d="M188 121c3 6 3 10 0 16" fill="none" stroke="#8a8a8a" stroke-width="3"/><path d="M188 121c3 6 3 10 0 16" fill="none" stroke="#efefef" stroke-width="1.2"/>
<rect x="179" y="125" width="2.4" height="9" fill="#c8c8c8" stroke="#777" stroke-width="0.6"/>
<circle cx="172" cy="121" r="3.5" fill="#888" stroke="#777" stroke-width="0.7"/>
<circle cx="188" cy="121" r="3.5" fill="#888" stroke="#777" stroke-width="0.7"/>
<circle cx="172" cy="137" r="3.5" fill="#888" stroke="#777" stroke-width="0.7"/>
<circle cx="188" cy="137" r="3.5" fill="#888" stroke="#777" stroke-width="0.7"/>
<circle cx="180.3" cy="124.5" r="2" fill="#888" stroke="#777" stroke-width="0.7"/>
<circle cx="180.3" cy="134.5" r="2" fill="#888" stroke="#777" stroke-width="0.7"/>
<rect x="199.5" y="118.5" width="6" height="2" fill="#999"/><rect x="199.5" y="122" width="6" height="2" fill="#999"/>
<path d="M210 121c-3 6-3 10 0 16" fill="none" stroke="#8a8a8a" stroke-width="3"/><path d="M210 121c-3 6-3 10 0 16" fill="none" stroke="#efefef" stroke-width="1.2"/>
<path d="M218 121c-3 6-3 10 0 16" fill="none" stroke="#8a8a8a" stroke-width="3"/><path d="M218 121c-3 6-3 10 0 16" fill="none" stroke="#efefef" stroke-width="1.2"/>
<circle cx="210" cy="121" r="3.5" fill="#888" stroke="#777" stroke-width="0.7"/>
<circle cx="218.5" cy="121" r="3.5" fill="#888" stroke="#777" stroke-width="0.7"/>
<circle cx="210" cy="137" r="3.5" fill="#888" stroke="#777" stroke-width="0.7"/>
<circle cx="218.5" cy="137" r="3.5" fill="#888" stroke="#777" stroke-width="0.7"/>
<path d="M229.2 126.5 h7 l-3.5 4z" fill="#555"/>
<rect x="243.5" y="125" width="3.6" height="14" rx="1.5" fill="#d0d0d0" stroke="#888" stroke-width="0.8"/><rect x="249.5" y="122" width="3.6" height="13" rx="1.5" fill="#d0d0d0" stroke="#888" stroke-width="0.8"/><rect x="255.5" y="119.5" width="3.6" height="12" rx="1.5" fill="#d0d0d0" stroke="#888" stroke-width="0.8"/><rect x="261.5" y="118" width="3.6" height="11" rx="1.5" fill="#d0d0d0" stroke="#888" stroke-width="0.8"/>
<circle cx="245.3" cy="125.5" r="1.8" fill="#8a8a8a" stroke="#777" stroke-width="0.7"/>
<circle cx="245.3" cy="138.5" r="1.8" fill="#8a8a8a" stroke="#777" stroke-width="0.7"/>
<circle cx="251.3" cy="122.5" r="1.8" fill="#8a8a8a" stroke="#777" stroke-width="0.7"/>
<circle cx="251.3" cy="134.5" r="1.8" fill="#8a8a8a" stroke="#777" stroke-width="0.7"/>
<circle cx="257.3" cy="120" r="1.8" fill="#8a8a8a" stroke="#777" stroke-width="0.7"/>
<circle cx="257.3" cy="131" r="1.8" fill="#8a8a8a" stroke="#777" stroke-width="0.7"/>
<circle cx="263.3" cy="118.5" r="1.8" fill="#8a8a8a" stroke="#777" stroke-width="0.7"/>
<circle cx="263.3" cy="128.5" r="1.8" fill="#8a8a8a" stroke="#777" stroke-width="0.7"/>
<rect x="271" y="112" width="1" height="33" fill="#cbcbcb"/><rect x="272" y="112" width="1" height="33" fill="#fcfcfc"/>
<rect x="275.5" y="116.5" width="2" height="2" fill="#ffffff"/><rect x="276.5" y="117.5" width="1.6" height="1.6" fill="#b4b4b4"/>
<rect x="275.5" y="120.5" width="2" height="2" fill="#ffffff"/><rect x="276.5" y="121.5" width="1.6" height="1.6" fill="#b4b4b4"/>
<rect x="275.5" y="124.5" width="2" height="2" fill="#ffffff"/><rect x="276.5" y="125.5" width="1.6" height="1.6" fill="#b4b4b4"/>
<rect x="275.5" y="128.5" width="2" height="2" fill="#ffffff"/><rect x="276.5" y="129.5" width="1.6" height="1.6" fill="#b4b4b4"/>
<rect x="275.5" y="132.5" width="2" height="2" fill="#ffffff"/><rect x="276.5" y="133.5" width="1.6" height="1.6" fill="#b4b4b4"/>
<rect x="275.5" y="136.5" width="2" height="2" fill="#ffffff"/><rect x="276.5" y="137.5" width="1.6" height="1.6" fill="#b4b4b4"/>
<rect x="275.5" y="140.5" width="2" height="2" fill="#ffffff"/><rect x="276.5" y="141.5" width="1.6" height="1.6" fill="#b4b4b4"/>
<path d="M290 122.8L305.3 120.6L303.7 134.7L288.7 136.9z" fill="#f4f4f4" stroke="#2e9a2e" stroke-width="2.2"/><rect x="291.5" y="125.5" width="11" height="7" rx="3.2" transform="rotate(-55 297 129)" fill="#fff" stroke="#444" stroke-width="1.1"/>
<circle cx="290" cy="122.8" r="3" fill="url(#rd)" stroke="#8a0000" stroke-width="0.7"/>
<circle cx="305.3" cy="120.6" r="3" fill="url(#rd)" stroke="#8a0000" stroke-width="0.7"/>
<circle cx="288.7" cy="136.9" r="3" fill="url(#rd)" stroke="#8a0000" stroke-width="0.7"/>
<circle cx="303.7" cy="134.7" r="3" fill="url(#rd)" stroke="#8a0000" stroke-width="0.7"/>
<path d="M315.1 126.5 h7 l-3.5 4z" fill="#1a1a1a"/>
<circle cx="339.8" cy="129" r="9.5" fill="none" stroke="#bbb" stroke-width="2.2" stroke-dasharray="4 3"/><circle cx="339.8" cy="129" r="9.5" fill="none" stroke="#f0f0f0" stroke-width="0.8" stroke-dasharray="4 3"/>
<circle cx="335" cy="120.5" r="1.8" fill="#999" stroke="#777" stroke-width="0.7"/>
<circle cx="344" cy="120.5" r="1.8" fill="#999" stroke="#777" stroke-width="0.7"/>
<circle cx="348" cy="125" r="1.8" fill="#999" stroke="#777" stroke-width="0.7"/>
<circle cx="348.5" cy="133" r="1.8" fill="#999" stroke="#777" stroke-width="0.7"/>
<path d="M364 119v20M370 119v20M360 124h12M360 131h12" stroke="#a8a8a8" stroke-width="2.6"/><path d="M372 139l6-6v-8" fill="none" stroke="#aaa" stroke-width="1.4"/>
<circle cx="369" cy="139" r="2" fill="#999" stroke="#777" stroke-width="0.7"/>
<circle cx="378.5" cy="124" r="2" fill="#999" stroke="#777" stroke-width="0.7"/>
<circle cx="378" cy="133" r="2" fill="#999" stroke="#777" stroke-width="0.7"/>
<path d="M392 122h10M397 117v11" stroke="#5a8ad8" stroke-width="3.4"/><path d="M396 127v12M402 124v14M391 132h14M391 136h12" stroke="#38a038" stroke-width="2.2"/><path d="M404 137l5-5v-9" fill="none" stroke="#888" stroke-width="1.2"/>
<circle cx="401" cy="139.5" r="2.2" fill="url(#rd)" stroke="#8a0000" stroke-width="0.7"/>
<circle cx="410.5" cy="123" r="2.2" fill="url(#rd)" stroke="#8a0000" stroke-width="0.7"/>
<circle cx="410" cy="133" r="2.2" fill="url(#rd)" stroke="#8a0000" stroke-width="0.7"/>
<path d="M419.8 126.5 h7 l-3.5 4z" fill="#1a1a1a"/>
</svg>

<!-- combo view -->
<div class="a" style="left:0;top:147px;width:359px;height:19px;background:#dadada;border:1px solid #c6c6c6;border-left:none"></div>
<div class="t" style="left:1.6px;top:152px;font-size:10.5px;letter-spacing:-0.3px">Combo View</div>
<svg class="a" style="left:346px;top:152px" width="9" height="9" viewBox="0 0 9 9"><path d="M3 0.75h5.25v4.5" fill="none" stroke="#000" stroke-width="1.5"/><rect x="0.75" y="3.75" width="5.5" height="4.5" fill="#fff" stroke="#000" stroke-width="1.5"/><rect x="3" y="0.75" width="5.25" height="1.5" fill="#000"/></svg>
<div class="a" style="left:2px;top:170px;width:49px;height:20px;background:#f0f0f0;border:1px solid #d9d9d9;border-bottom:none"></div>
<div class="t" style="left:11.6px;top:174.6px;font-size:10.5px;letter-spacing:-0.35px">Model</div>
<div class="a" style="left:50px;top:168px;width:52px;height:22px;background:#fff;border:1px solid #d9d9d9;border-bottom:none"></div>
<div class="t" style="left:64.3px;top:173.9px;font-size:10.5px;letter-spacing:-0.6px">Tasks</div>

<!-- panel frame -->
<div class="a" style="left:1px;top:188px;width:356px;height:461px;background:#fff"></div>
<div class="a" style="left:2px;top:189px;width:353px;height:458px;background:#6e747c"></div>
<div class="a" style="left:3px;top:190px;width:334px;height:456px;background:linear-gradient(#aaaac1,#9a9ab5 15%,#2f2f5d)"></div>
<div class="a" style="left:337px;top:190px;width:17px;height:456px;background:#f0f0f0"></div>
<div class="a" style="left:338px;top:208px;width:15px;height:208px;background:#cdcdcd"></div>
<svg class="a" style="left:341px;top:196px" width="9" height="7" viewBox="0 0 9 7"><path d="M1 5.5l3.5-3.5 3.5 3.5" fill="none" stroke="#505050" stroke-width="1.8"/></svg>
<svg class="a" style="left:341px;top:634px" width="9" height="7" viewBox="0 0 9 7"><path d="M1 1.5l3.5 3.5 3.5-3.5" fill="none" stroke="#505050" stroke-width="1.8"/></svg>

<div class="btn" style="left:134px;top:210px;width:72px;height:20px"></div>
<div class="t" style="left:156.4px;top:215.1px;font-size:11px;letter-spacing:-0.6px">Close</div>

<!-- solver messages -->
<div class="hdrb" style="top:248px;height:25px"></div>
<div class="a" style="left:12px;top:272px;width:316px;height:1px;background:#fff"></div>
<div class="body" style="top:273px;height:124px;border-bottom:1px solid #fff"></div>
<div class="doc" style="left:21px;top:253px"></div><div class="dot" style="left:28.2px;top:252.8px"></div>
<div class="hdrt" style="left:39.4px;top:256.2px;letter-spacing:0.44px">Solver messages</div>
<div class="colb" style="left:310px;top:253px"></div>
<svg class="a" style="left:313px;top:255px" width="9" height="10" viewBox="0 0 9 10"><path d="M1 5l3.5-3.5 3.5 3.5M1 9l3.5-3.5 3.5 3.5" fill="none" stroke="#13319a" stroke-width="1.6"/></svg>
<div class="t" style="left:25.2px;top:287.6px;font-size:12px;letter-spacing:0.25px">Under-constrained sketch with 6 degrees of</div>
<div class="t" style="left:25.2px;top:301.2px;font-size:12px;letter-spacing:0.25px">freedom</div>
<div class="t" style="left:25.2px;top:321.5px;font-size:12px;color:#23922a">Solved in 0 sec</div>
<div class="cb" style="left:25px;top:365px"></div>
<svg class="a" style="left:25px;top:365px" width="13" height="13" viewBox="0 0 13 13"><path d="M2.5 6.5l2.8 2.8 5.2-5.6" fill="none" stroke="#333" stroke-width="1.3"/></svg>
<div class="t" style="left:42.5px;top:367px;font-size:11px">Auto Update</div>
<div class="btn" style="left:174px;top:361px;width:140px;height:21px"></div>
<div class="t" style="left:225.5px;top:366.7px;font-size:11px;letter-spacing:-0.25px">Update</div>

<!-- edit controls -->
<div class="hdrb" style="top:406px;height:25px;border-bottom:1px solid #fff"></div>
<div class="doc" style="left:21px;top:411px"></div><div class="dot" style="left:28.2px;top:410.8px"></div>
<div class="hdrt" style="left:39.6px;top:414.2px;letter-spacing:0.15px">Edit controls</div>
<div class="colb" style="left:310px;top:411px"></div>
<svg class="a" style="left:313px;top:413px" width="9" height="10" viewBox="0 0 9 10"><path d="M1 5l3.5-3.5 3.5 3.5M1 9l3.5-3.5 3.5 3.5" fill="none" stroke="#13319a" stroke-width="1.6"/></svg>

<!-- constraints -->
<div class="hdrb" style="top:441px;height:25px"></div>
<div class="a" style="left:12px;top:465px;width:316px;height:1px;background:#fff"></div>
<div class="body" style="top:466px;height:180px"></div>
<div class="doc" style="left:21px;top:446px"></div><div class="dot" style="left:28.2px;top:445.8px"></div>
<div class="hdrt" style="left:39.6px;top:448.6px;letter-spacing:0.31px">Constraints</div>
<div class="colb" style="left:310px;top:446px"></div>
<svg class="a" style="left:313px;top:448px" width="9" height="10" viewBox="0 0 9 10"><path d="M1 5l3.5-3.5 3.5 3.5M1 9l3.5-3.5 3.5 3.5" fill="none" stroke="#13319a" stroke-width="1.6"/></svg>
<div class="t" style="left:24.8px;top:483.5px;font-size:11px">Filter:</div>
<div class="btn" style="left:173px;top:479px;width:142px;height:20px"></div>
<div class="t" style="left:176.5px;top:484px;font-size:11px">All</div>
<svg class="a" style="left:300px;top:486px" width="9" height="6" viewBox="0 0 9 6"><path d="M0.5 0.5h8l-4 5z" fill="#000"/></svg>
<div class="cb" style="left:25px;top:507px"></div>
<svg class="a" style="left:25px;top:507px" width="13" height="13" viewBox="0 0 13 13"><path d="M2.5 6.5l2.8 2.8 5.2-5.6" fill="none" stroke="#333" stroke-width="1.3"/></svg>
<div class="t" style="left:42.4px;top:509.2px;font-size:11px;letter-spacing:-0.1px">Hide Internal Aligment</div>
<div class="a" style="left:25px;top:528px;width:290px;height:118px;background:#fff;border:1px solid #828790;border-bottom:none"></div>
<div class="a" style="left:297px;top:529px;width:17px;height:117px;background:#f0f0f0"></div>
<div class="a" style="left:298px;top:547px;width:15px;height:42px;background:#cdcdcd"></div>
<svg class="a" style="left:301px;top:535px" width="9" height="7" viewBox="0 0 9 7"><path d="M1 5.5l3.5-3.5 3.5 3.5" fill="none" stroke="#505050" stroke-width="1.8"/></svg>
<div class="a" style="left:26px;top:529px;width:271px;height:117px;overflow:hidden"><div class="a" style="left:9.5px;top:7.50px;width:5px;height:5px;border-radius:50%;background:#c80a0a"></div>
<div class="t" style="left:26.9px;top:6.09px;font-size:11px;letter-spacing:0.3px">Constraint1</div>
<div class="a" style="left:9.5px;top:25.50px;width:5px;height:5px;border-radius:50%;background:#c80a0a"></div>
<div class="t" style="left:26.9px;top:24.09px;font-size:11px;letter-spacing:0.3px">Constraint2</div>
<div class="a" style="left:9.5px;top:43.50px;width:5px;height:5px;border-radius:50%;background:#c80a0a"></div>
<div class="t" style="left:26.9px;top:42.09px;font-size:11px;letter-spacing:0.3px">Constraint3</div>
<div class="a" style="left:9.5px;top:61.50px;width:5px;height:5px;border-radius:50%;background:#c80a0a"></div>
<div class="t" style="left:26.9px;top:60.09px;font-size:11px;letter-spacing:0.3px">Constraint4</div>
<div class="a" style="left:9.5px;top:79.50px;width:5px;height:5px;border-radius:50%;background:#c80a0a"></div>
<div class="t" style="left:26.9px;top:78.09px;font-size:11px;letter-spacing:0.3px">Constraint5</div>
<div class="a" style="left:9.5px;top:97.50px;width:5px;height:5px;border-radius:50%;background:#c80a0a"></div>
<div class="t" style="left:26.9px;top:96.09px;font-size:11px;letter-spacing:0.3px">Constraint6</div>
<div class="a" style="left:7px;top:114.00px;width:10px;height:8px;background:#c01010"></div>
<div class="t" style="left:26.9px;top:114.09px;font-size:11px;letter-spacing:0.3px">Constraint7</div></div>

<!-- 3d view -->
<svg class="a" style="left:363px;top:146px" width="635" height="482" viewBox="363 146 635 482">
 <defs><linearGradient id="vg" x1="0" y1="0" x2="0" y2="1"><stop offset="0" stop-color="#343562"/><stop offset="1" stop-color="#9595ac"/></linearGradient></defs>
 <rect x="363" y="146" width="635" height="482" fill="url(#vg)"/>
 <g stroke="#cacaca" stroke-width="1" stroke-dasharray="4 4" fill="none">
<line x1="388.5" y1="146" x2="388.5" y2="587" stroke-dashoffset="3"/>
<line x1="421.5" y1="146" x2="421.5" y2="587" stroke-dashoffset="3"/>
<line x1="455.5" y1="146" x2="455.5" y2="587" stroke-dashoffset="3"/>
<line x1="488.5" y1="146" x2="488.5" y2="587" stroke-dashoffset="3"/>
<line x1="522.5" y1="146" x2="522.5" y2="587" stroke-dashoffset="3"/>
<line x1="555.5" y1="146" x2="555.5" y2="587" stroke-dashoffset="3"/>
<line x1="589.5" y1="146" x2="589.5" y2="587" stroke-dashoffset="3"/>
<line x1="622.5" y1="146" x2="622.5" y2="587" stroke-dashoffset="3"/>
<line x1="656.5" y1="146" x2="656.5" y2="587" stroke-dashoffset="3"/>
<line x1="689.5" y1="146" x2="689.5" y2="587" stroke-dashoffset="3"/>
<line x1="723.5" y1="146" x2="723.5" y2="587" stroke-dashoffset="3"/>
<line x1="756.5" y1="146" x2="756.5" y2="587" stroke-dashoffset="3"/>
<line x1="790.5" y1="146" x2="790.5" y2="587" stroke-dashoffset="3"/>
<line x1="823.5" y1="146" x2="823.5" y2="587" stroke-dashoffset="3"/>
<line x1="857.5" y1="146" x2="857.5" y2="587" stroke-dashoffset="3"/>
<line x1="890.5" y1="146" x2="890.5" y2="587" stroke-dashoffset="3"/>
<line x1="924.5" y1="146" x2="924.5" y2="587" stroke-dashoffset="3"/>
<line x1="363" y1="150.5" x2="958" y2="150.5" stroke-dashoffset="0"/>
<line x1="363" y1="184.5" x2="958" y2="184.5" stroke-dashoffset="0"/>
<line x1="363" y1="217.5" x2="958" y2="217.5" stroke-dashoffset="0"/>
<line x1="363" y1="251.5" x2="958" y2="251.5" stroke-dashoffset="0"/>
<line x1="363" y1="285.5" x2="958" y2="285.5" stroke-dashoffset="0"/>
<line x1="363" y1="318.5" x2="958" y2="318.5" stroke-dashoffset="0"/>
<line x1="363" y1="352.5" x2="958" y2="352.5" stroke-dashoffset="0"/>
<line x1="363" y1="385.5" x2="958" y2="385.5" stroke-dashoffset="0"/>
<line x1="363" y1="419.5" x2="958" y2="419.5" stroke-dashoffset="0"/>
<line x1="363" y1="452.5" x2="958" y2="452.5" stroke-dashoffset="0"/>
<line x1="363" y1="486.5" x2="958" y2="486.5" stroke-dashoffset="0"/>
<line x1="363" y1="519.5" x2="958" y2="519.5" stroke-dashoffset="0"/>
<line x1="363" y1="553.5" x2="958" y2="553.5" stroke-dashoffset="0"/>
<line x1="363" y1="586.5" x2="958" y2="586.5" stroke-dashoffset="0"/>
</g>
<line x1="388" y1="385" x2="951.5" y2="385" stroke="#dc5f5f" stroke-width="2"/>
<line x1="455" y1="146" x2="455" y2="568" stroke="#5fd35f" stroke-width="2"/>
<circle cx="614.9" cy="271.0" r="96.9" fill="none" stroke="#0000e0" stroke-width="3"/>
<path d="M712.5 271.0 L663.7 186.4 L566.1 186.4 L517.3 271.0 L566.1 355.6 L663.7 355.6 Z" fill="none" stroke="#fff" stroke-width="3" stroke-linejoin="miter"/>
<path transform="translate(565 191)" d="M0.8 1.2H8.3V0H14V2.2H8.6L2.6 8.6L2.1 14H0.9L0.2 8.6Z" fill="#ff2a00"/>
<path transform="translate(650.5 191)" d="M0.8 1.2H8.3V0H14V2.2H8.6L2.6 8.6L2.1 14H0.9L0.2 8.6Z" fill="#ff2a00"/>
<path transform="translate(522 265)" d="M0.8 1.2H8.3V0H14V2.2H8.6L2.6 8.6L2.1 14H0.9L0.2 8.6Z" fill="#ff2a00"/>
<path transform="translate(694 265)" d="M0.8 1.2H8.3V0H14V2.2H8.6L2.6 8.6L2.1 14H0.9L0.2 8.6Z" fill="#ff2a00"/>
<path transform="translate(565 338)" d="M0.8 1.2H8.3V0H14V2.2H8.6L2.6 8.6L2.1 14H0.9L0.2 8.6Z" fill="#ff2a00"/>
<path transform="translate(650.5 338)" d="M0.8 1.2H8.3V0H14V2.2H8.6L2.6 8.6L2.1 14H0.9L0.2 8.6Z" fill="#ff2a00"/>
<rect x="603" y="194.2" width="10.4" height="3" fill="#ff2a00"/><rect x="603" y="198.7" width="10.4" height="3" fill="#ff2a00"/>
<text x="617" y="205.5" font-family="Liberation Sans" font-weight="bold" font-size="11" letter-spacing="0.4" fill="#ff2a00">10</text>
<rect x="540.7" y="230.5" width="10.4" height="3" fill="#ff2a00"/><rect x="540.7" y="235.0" width="10.4" height="3" fill="#ff2a00"/>
<text x="554" y="241" font-family="Liberation Sans" font-weight="bold" font-size="11" letter-spacing="0.4" fill="#ff2a00">11</text>
<rect x="668.8" y="230.5" width="10.4" height="3" fill="#ff2a00"/><rect x="668.8" y="235.0" width="10.4" height="3" fill="#ff2a00"/>
<text x="682" y="241" font-family="Liberation Sans" font-weight="bold" font-size="11" letter-spacing="0.4" fill="#ff2a00">9</text>
<rect x="510.8" y="303" width="10.4" height="3" fill="#ff2a00"/><rect x="510.8" y="307.5" width="10.4" height="3" fill="#ff2a00"/>
<text x="524.5" y="313.8" font-family="Liberation Sans" font-weight="bold" font-size="11" letter-spacing="0.4" fill="#ff2a00">11, 7, 8, 9, 10</text>
<rect x="668.8" y="303.2" width="10.4" height="3" fill="#ff2a00"/><rect x="668.8" y="307.7" width="10.4" height="3" fill="#ff2a00"/>
<text x="682" y="314" font-family="Liberation Sans" font-weight="bold" font-size="11" letter-spacing="0.4" fill="#ff2a00">8</text>
<rect x="604" y="333.5" width="14" height="2.2" fill="#ff2a00"/>
<rect x="606" y="346.6" width="10.4" height="3" fill="#ff2a00"/><rect x="606" y="351.1" width="10.4" height="3" fill="#ff2a00"/>
<text x="619.5" y="358" font-family="Liberation Sans" font-weight="bold" font-size="11" letter-spacing="0.4" fill="#ff2a00">7</text>
<circle cx="712.5" cy="271.0" r="3.6" fill="#ff2a00"/>
<circle cx="663.7" cy="186.4" r="3.6" fill="#ff2a00"/>
<circle cx="566.1" cy="186.4" r="3.6" fill="#ff2a00"/>
<circle cx="517.3" cy="271.0" r="3.6" fill="#ff2a00"/>
<circle cx="566.1" cy="355.6" r="3.6" fill="#ff2a00"/>
<circle cx="663.7" cy="355.6" r="3.6" fill="#ff2a00"/>
<circle cx="614.9" cy="271.0" r="3.5" fill="#ff2a00"/>
<circle cx="814.5" cy="419.6" r="105.0" fill="none" stroke="#0000e0" stroke-width="3"/>
<path d="M919.5 419.6 L867.0 328.1 L762.0 328.1 L709.5 419.6 L762.0 511.1 L867.0 511.1 Z" fill="none" stroke="#fff" stroke-width="3" stroke-linejoin="miter"/>
<path transform="translate(760.2 332)" d="M0.8 1.2H8.3V0H14V2.2H8.6L2.6 8.6L2.1 14H0.9L0.2 8.6Z" fill="#ff2a00"/>
<path transform="translate(854.4 332)" d="M0.8 1.2H8.3V0H14V2.2H8.6L2.6 8.6L2.1 14H0.9L0.2 8.6Z" fill="#ff2a00"/>
<path transform="translate(714 412.6)" d="M0.8 1.2H8.3V0H14V2.2H8.6L2.6 8.6L2.1 14H0.9L0.2 8.6Z" fill="#ff2a00"/>
<path transform="translate(899.8 412.6)" d="M0.8 1.2H8.3V0H14V2.2H8.6L2.6 8.6L2.1 14H0.9L0.2 8.6Z" fill="#ff2a00"/>
<path transform="translate(760.2 493.4)" d="M0.8 1.2H8.3V0H14V2.2H8.6L2.6 8.6L2.1 14H0.9L0.2 8.6Z" fill="#ff2a00"/>
<path transform="translate(854.4 493.4)" d="M0.8 1.2H8.3V0H14V2.2H8.6L2.6 8.6L2.1 14H0.9L0.2 8.6Z" fill="#ff2a00"/>
<rect x="803" y="335.5" width="10.4" height="3" fill="#ff2a00"/><rect x="803" y="340.0" width="10.4" height="3" fill="#ff2a00"/>
<text x="817" y="348" font-family="Liberation Sans" font-weight="bold" font-size="11" letter-spacing="0.4" fill="#ff2a00">27</text>
<rect x="734" y="376.6" width="10.4" height="3" fill="#ff2a00"/><rect x="734" y="381.1" width="10.4" height="3" fill="#ff2a00"/>
<text x="747.5" y="387.8" font-family="Liberation Sans" font-weight="bold" font-size="11" letter-spacing="0.4" fill="#ff2a00">28</text>
<rect x="871" y="376.6" width="10.4" height="3" fill="#ff2a00"/><rect x="871" y="381.1" width="10.4" height="3" fill="#ff2a00"/>
<text x="884.8" y="388" font-family="Liberation Sans" font-weight="bold" font-size="11" letter-spacing="0.4" fill="#ff2a00">26</text>
<rect x="693.8" y="455.2" width="10.4" height="3" fill="#ff2a00"/><rect x="693.8" y="459.7" width="10.4" height="3" fill="#ff2a00"/>
<text x="707.6" y="467" font-family="Liberation Sans" font-weight="bold" font-size="11" letter-spacing="0.4" fill="#ff2a00">28, 24, 25, 26, 27</text>
<rect x="871" y="455.2" width="10.4" height="3" fill="#ff2a00"/><rect x="871" y="459.7" width="10.4" height="3" fill="#ff2a00"/>
<text x="884.8" y="467" font-family="Liberation Sans" font-weight="bold" font-size="11" letter-spacing="0.4" fill="#ff2a00">25</text>
<rect x="801" y="488.6" width="13.5" height="2.2" fill="#ff2a00"/>
<rect x="802.4" y="502.4" width="10.4" height="3" fill="#ff2a00"/><rect x="802.4" y="506.9" width="10.4" height="3" fill="#ff2a00"/>
<text x="816.8" y="513" font-family="Liberation Sans" font-weight="bold" font-size="11" letter-spacing="0.4" fill="#ff2a00">24</text>
<circle cx="919.5" cy="419.6" r="3.6" fill="#ff2a00"/>
<circle cx="867.0" cy="328.1" r="3.6" fill="#ff2a00"/>
<circle cx="762.0" cy="328.1" r="3.6" fill="#ff2a00"/>
<circle cx="709.5" cy="419.6" r="3.6" fill="#ff2a00"/>
<circle cx="762.0" cy="511.1" r="3.6" fill="#ff2a00"/>
<circle cx="867.0" cy="511.1" r="3.6" fill="#ff2a00"/>
<circle cx="814.5" cy="419.6" r="3.5" fill="#ff2a00"/>
<circle cx="455" cy="385" r="3.6" fill="#ff2a00"/>
</svg>

<!-- document tabs -->
<div class="a" style="left:365px;top:628px;width:112px;height:20px;background:#f0f0f0;border:1px solid #d9d9d9;border-top:none"></div>
<div class="a" style="left:476px;top:627px;width:123px;height:23px;background:#fff;border:1px solid #d9d9d9;border-top:none"></div>
<div class="t" style="left:394.3px;top:632.7px;font-size:11px">Start page</div>
<div class="t" style="left:509.6px;top:632.9px;font-size:11px;letter-spacing:0.1px">Tutorial : 1*</div>

<!-- taskbar -->
<div class="a" style="left:0;top:680px;width:998px;height:40px;background:#20211e"></div>
<svg class="a" style="left:363px;top:627px" width="240" height="24" viewBox="363 627 240 24"><defs><radialGradient id="glb" cx="0.4" cy="0.35" r="0.7"><stop offset="0" stop-color="#bfe4ff"/><stop offset="0.5" stop-color="#3f8fe0"/><stop offset="1" stop-color="#1a4fa8"/></radialGradient></defs><circle cx="382.8" cy="637.3" r="7" fill="url(#glb)" stroke="#2a5ba8" stroke-width="0.6"/><path d="M379 633c2-1 4 0 4 2s-3 2-3 4-2 1-2-1z M384 638c2 0 3 1 2 3s-2 2-3 1z" fill="#e8f4ff" opacity="0.9"/><rect x="450.5" y="632.5" width="13" height="12" fill="#c4c4c4" stroke="#a8a8a8"/><path d="M454 636l6 5M460 636l-6 5" stroke="#fff" stroke-width="1.8"/><path d="M490 630h9.5v3h-6v3.5h5v3h-5v6.5h-3.5z" fill="#d41c1c" stroke="#6a0000" stroke-width="0.5"/><g transform="translate(500 640.5)"><circle r="4.6" fill="#3562c8" stroke="#1a2f70" stroke-width="0.6"/><path d="M0 -6.2v2.5M0 3.7v2.5M-6.2 0h2.5M3.7 0h2.5M-4.4 -4.4l1.8 1.8M2.6 2.6l1.8 1.8M-4.4 4.4l1.8 -1.8M2.6 -2.6l1.8 -1.8" stroke="#3562c8" stroke-width="2.2"/><circle r="1.6" fill="#fff"/></g><rect x="571.5" y="632.5" width="13" height="13" fill="#e06a3c" stroke="#b44a20"/><path d="M575 636l6 6M581 636l-6 6" stroke="#fff" stroke-width="1.8"/></svg>
<svg class="a" style="left:0;top:680px" width="998" height="40" viewBox="0 680 998 40">
<rect x="344" y="680" width="48" height="40" fill="#3d3d3b"/>
<path d="M15.5 694.2l7-1v7h-7z M23.5 693l8.5-1.2v8.2h-8.5z M15.5 701h7v7l-7-1z M23.5 701h8.5v8.2l-8.5-1.2z" fill="#fff"/>
<rect x="65" y="693.5" width="14" height="13" fill="none" stroke="#fff" stroke-width="1.3"/><path d="M63.5 695.5h-1.8v9h1.8M80.5 695.5h1.8v9h-1.8" fill="none" stroke="#fff" stroke-width="1.1"/>
<path d="M111.5 694h22v17h-22z" fill="#fff"/><path d="M117 694c0-6 11-6 11 0" fill="none" stroke="#fff" stroke-width="1.3"/><path d="M117 699h5v4.5h-5zM123 699h5v4.5h-5zM117 704.5h5v4.5h-5zM123 704.5h5v4.5h-5z" fill="#1e1f1c"/>
<rect x="162" y="692" width="20" height="16" fill="#5a2a30"/><path d="M166 692v16M170 692v16M174 692v16M178 692v16M162 696h20M162 700h20M162 704h20" stroke="#8a4a50" stroke-width="1"/><path d="M161 704h22l-2 6h-18z" fill="#d89020"/>
<circle cx="220.8" cy="699.7" r="10.8" fill="#db4437"/><path d="M220.8 699.7L211.5 705.1A10.8 10.8 0 0 0 226.2 709.1z" fill="#0f9d58"/><path d="M220.8 699.7L226.2 709.1A10.8 10.8 0 0 0 231.6 699.7V694.3h-10.8z" fill="#ffcd40"/><path d="M220.8 694.3h10.8A10.8 10.8 0 0 0 211.5 694.3l4.6 8z" fill="#db4437"/><circle cx="220.8" cy="699.7" r="4.8" fill="#fff"/><circle cx="220.8" cy="699.7" r="3.8" fill="#4285f4"/>
<path d="M259 692h8l2 2h11v15h-21z" fill="#f0c860"/><path d="M259 697h21v12h-21z" fill="#fbe29a"/><path d="M266 704h8v5h-2v-3h-4v3h-2z" fill="#2d7fd6"/><rect x="265" y="703" width="10" height="1.5" fill="#2d7fd6"/>
<rect x="307" y="688" width="24" height="24" fill="#c01a1e"/><path d="M319 712l12-12v12z" fill="#9c1216"/><text x="312" y="706" font-family="Liberation Sans" font-weight="bold" font-size="15" fill="#fff">M</text>
<path d="M357 689h13v4h-8v5h7v4h-7v9h-5z" fill="#e01818" stroke="#4a0000" stroke-width="0.6"/>
<g transform="translate(373 703)"><circle r="6" fill="#2f5cc8" stroke="#142a70" stroke-width="0.8"/><path d="M0 -8.3v3M0 5.3v3M-8.3 0h3M5.3 0h3M-5.9 -5.9l2.1 2.1M3.8 3.8l2.1 2.1M-5.9 5.9l2.1 -2.1M3.8 -3.8l2.1 -2.1" stroke="#2f5cc8" stroke-width="3"/><circle r="2.2" fill="#3d3d3b"/></g>
<rect x="412" y="691" width="16" height="19" fill="#fff"/><path d="M414 695h12M414 698h12M414 701h12M414 704h12M414 707h12" stroke="#2b579a" stroke-width="1"/><path d="M405 693l14-2.5v21l-14-2.5z" fill="#2b579a"/><text x="406.5" y="705" font-family="Liberation Sans" font-weight="bold" font-size="10" fill="#fff">W</text>
<circle cx="465.3" cy="699.7" r="11" fill="#c8ccd0"/><circle cx="465.3" cy="699.7" r="9" fill="#e6e8ea"/><rect x="458" y="692" width="14" height="4" fill="#b03030"/><path d="M462 700h6v4h2l-5 5-5-5h2z" fill="#3a7ad8"/>
<rect x="201" y="718" width="40" height="2" fill="#a8a8a8"/>
<rect x="250" y="718" width="40" height="2" fill="#a8a8a8"/>
<rect x="298.6" y="718" width="40.39999999999998" height="2" fill="#a8a8a8"/>
<rect x="344.2" y="718" width="47.69999999999999" height="2" fill="#a8a8a8"/>
<rect x="397" y="718" width="39.69999999999999" height="2" fill="#a8a8a8"/>
<rect x="445.8" y="718" width="40.39999999999998" height="2" fill="#a8a8a8"/>
<rect x="344.2" y="718" width="47.7" height="2" fill="#d8d8d8"/>
<path d="M955.5 702.5l5.8-5.8 5.8 5.8" fill="none" stroke="#fff" stroke-width="1.2"/>
<path d="M989 707a9 9 0 0 1 9 -9M992 707a6 6 0 0 1 6 -6M995 707a3 3 0 0 1 3 -3" fill="none" stroke="#fff" stroke-width="1.2"/>
</svg>
</body></html>
